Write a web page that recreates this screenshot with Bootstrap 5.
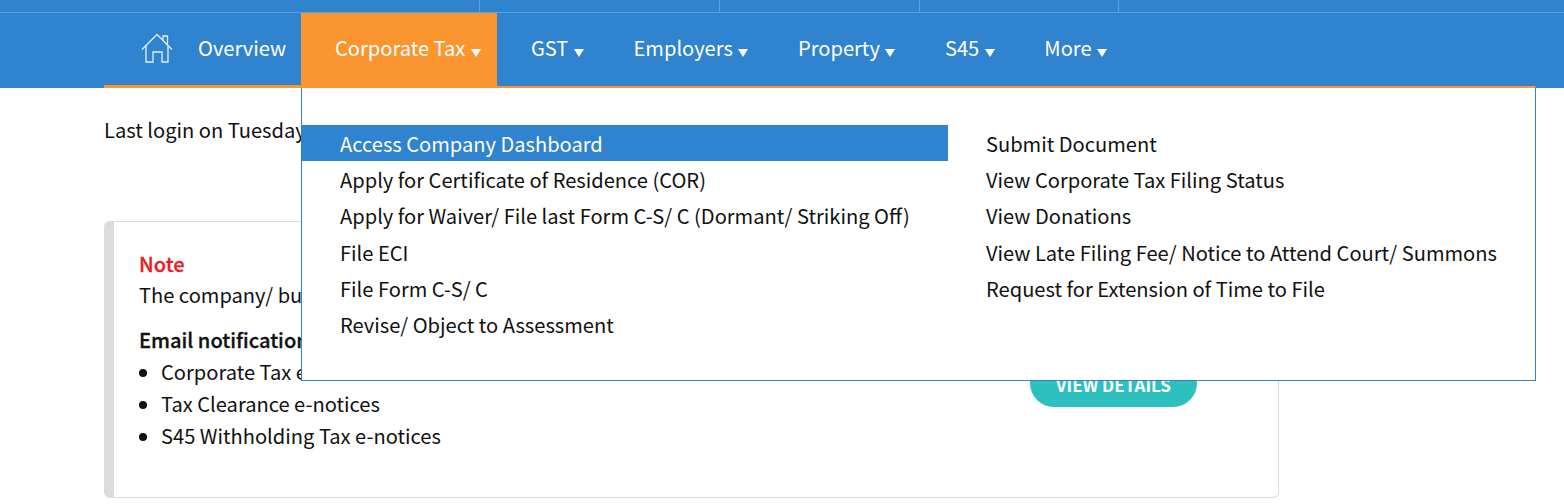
<!DOCTYPE html>
<html lang="en">
<head>
  <meta charset="UTF-8">
  <title>Overview</title>
  <link href="https://cdn.jsdelivr.net/npm/bootstrap@5.3.6/dist/css/bootstrap.min.css" rel="stylesheet">
  <style>
    body {
      font-family: "Noto Sans CJK SC", "Noto Sans", sans-serif;
      font-size: 20.1px;
      color: #111;
      background-color: #fff;
      overflow: hidden;
    }
    .top-strip {
      height: 13px;
      background-color: #3083cf;
      border-bottom: 1px solid #5a9fe0;
    }
    .top-cell {
      border-right: 1px solid #5a9fe0;
    }
    .main-bar {
      height: 75px;
      background-color: #3083cf;
      padding-left: 104px;
    }
    .main-nav {
      height: 75px;
      list-style: none;
      margin: 0;
      padding: 0;
    }
    .main-nav a {
      color: #fff;
      text-decoration: none;
      line-height: 70px;
      display: block;
      white-space: nowrap;
    }
    .nav-home {
      width: 197px;
      padding-left: 37px;
      border-bottom: 3px solid #fb9530;
    }
    .nav-home svg {
      margin-right: 25px;
      vertical-align: -7px;
    }
    .nav-drop {
      padding: 0 24.8px;
    }
    .nav-drop.is-open {
      position: relative;
      z-index: 6;
      background-color: #fb9530;
      height: 75px;
      width: 196px;
      padding: 0 0 0 34px;
      margin-right: 9.2px;
    }
    .caret-down {
      display: inline-block;
      width: 0;
      height: 0;
      margin-left: 1px;
      border-left: 5px solid transparent;
      border-right: 5px solid transparent;
      border-top: 8px solid #fff;
      vertical-align: -1px;
    }
    .drop-panel {
      position: absolute;
      left: 301px;
      top: 86px;
      width: 1235px;
      height: 295px;
      background-color: #fff;
      border: 1px solid #3083cf;
      border-top: 2px solid #fb9530;
      padding-top: 37px;
      z-index: 5;
    }
    .drop-left {
      width: 646px;
    }
    .drop-right {
      padding-left: 38px;
    }
    .drop-link {
      display: block;
      height: 36.2px;
      line-height: 37.6px;
      color: #111;
      text-decoration: none;
      padding-left: 38px;
      white-space: nowrap;
    }
    .drop-right .drop-link {
      padding-left: 0;
    }
    .drop-link.is-active {
      background-color: #3083cf;
      color: #fff;
    }
    .page-body {
      padding: 27px 0 0 104px;
      width: 1279px;
    }
    .last-login {
      line-height: 30px;
      margin: 0 0 76px;
    }
    .note-box {
      position: relative;
      height: 277px;
      border: 1px solid #dcdcdc;
      border-left: 10px solid #dcdcdc;
      border-radius: 6px;
      padding: 26px 25px 0;
    }
    .note-title {
      color: #ed1c24;
      font-weight: 500;
      line-height: 31px;
      -webkit-text-stroke: .3px #ed1c24;
    }
    .note-text {
      line-height: 32px;
      margin: 0 0 12px;
    }
    .note-sub {
      font-weight: 500;
      line-height: 33px;
      -webkit-text-stroke: .3px #111;
    }
    .note-list {
      margin: 0;
      padding-left: 22px;
      line-height: 32px;
    }
    .btn-details {
      position: absolute;
      left: 916px;
      top: 137px;
      width: 167px;
      height: 48px;
      line-height: 52px;
      padding: 0;
      border: 0;
      border-radius: 24px;
      background-color: #2ec0bf;
      color: #fff;
      font-weight: 700;
      font-size: 17px;
    }
  </style>
</head>
<body>

  <div class="top-strip d-flex">
    <div class="top-cell" style="width:480px"></div>
    <div class="top-cell" style="width:240px"></div>
    <div class="top-cell" style="width:200px"></div>
    <div class="top-cell" style="width:199px"></div>
  </div>

  <div class="main-bar">
    <ul class="main-nav d-flex">
      <li class="nav-home">
        <a href="#">
          <svg width="32" height="30" viewBox="0 0 32 30" fill="none" stroke="#e6f0fa" stroke-width="1.3">
            <path d="M1 16.5 16 1.5l15 15"/>
            <path d="M22 7V3h4.5v8.5"/>
            <path d="M5 12.5V29h7V19h9v10h6V12.5"/>
          </svg>Overview</a>
      </li>
      <li class="nav-drop is-open"><a href="#">Corporate Tax <span class="caret-down"></span></a></li>
      <li class="nav-drop"><a href="#">GST <span class="caret-down"></span></a></li>
      <li class="nav-drop"><a href="#">Employers <span class="caret-down"></span></a></li>
      <li class="nav-drop"><a href="#">Property <span class="caret-down"></span></a></li>
      <li class="nav-drop"><a href="#">S45 <span class="caret-down"></span></a></li>
      <li class="nav-drop"><a href="#">More <span class="caret-down"></span></a></li>
    </ul>
  </div>

  <div class="drop-panel d-flex">
    <div class="drop-left">
      <a class="drop-link is-active" href="#">Access Company Dashboard</a>
      <a class="drop-link" href="#">Apply for Certificate of Residence (COR)</a>
      <a class="drop-link" href="#">Apply for Waiver/ File last Form C-S/ C (Dormant/ Striking Off)</a>
      <a class="drop-link" href="#">File ECI</a>
      <a class="drop-link" href="#">File Form C-S/ C</a>
      <a class="drop-link" href="#">Revise/ Object to Assessment</a>
    </div>
    <div class="drop-right">
      <a class="drop-link" href="#">Submit Document</a>
      <a class="drop-link" href="#">View Corporate Tax Filing Status</a>
      <a class="drop-link" href="#">View Donations</a>
      <a class="drop-link" href="#">View Late Filing Fee/ Notice to Attend Court/ Summons</a>
      <a class="drop-link" href="#">Request for Extension of Time to File</a>
    </div>
  </div>

  <div class="page-body">
    <p class="last-login">Last login on Tuesday</p>
    <div class="note-box">
      <div class="note-title">Note</div>
      <p class="note-text">The company/ bu</p>
      <div class="note-sub">Email notification</div>
      <ul class="note-list">
        <li>Corporate Tax e</li>
        <li>Tax Clearance e-notices</li>
        <li>S45 Withholding Tax e-notices</li>
      </ul>
      <button class="btn btn-details" type="button">VIEW DETAILS</button>
    </div>
  </div>

  <script src="https://cdn.jsdelivr.net/npm/bootstrap@5.3.6/dist/js/bootstrap.bundle.min.js"></script>
</body>
</html>
